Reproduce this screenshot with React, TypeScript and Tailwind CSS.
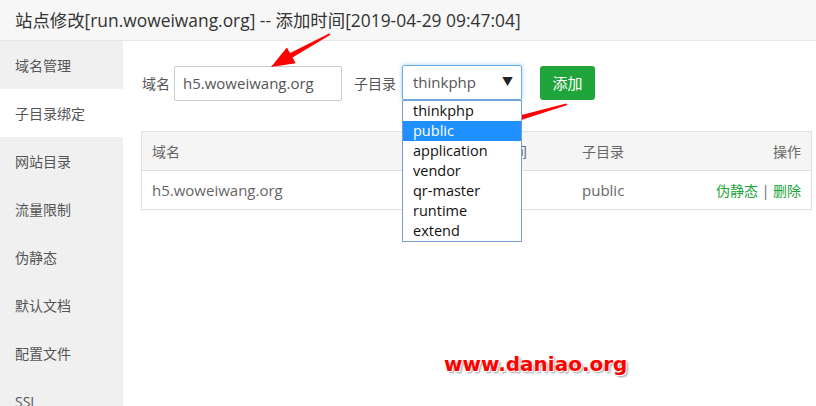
import React from "react";

const menu = ["域名管理", "子目录绑定", "网站目录", "流量限制", "伪静态", "默认文档", "配置文件", "SSL"];
const options = ["thinkphp", "public", "application", "vendor", "qr-master", "runtime", "extend"];

export default function App() {
  return (
    <div className="relative w-[816px] h-[406px] overflow-hidden bg-white font-['Open_Sans','Noto_Sans_CJK_SC',sans-serif]">
      <div className="h-[41px] bg-[#f7f7f7] border-b border-[#e6e6e6] flex items-center pl-[15px] text-[17.4px] text-[#333]">
        站点修改[run.woweiwang.org] -- 添加时间[2019-04-29 09:47:04]
      </div>
      <div className="flex h-[365px]">
        <div className="w-[123px] bg-[#f0f0f0] flex flex-col">
          {menu.map((m, i) => (
            <div
              key={m}
              className={`h-[48px] shrink-0 flex items-center pl-[15px] text-[14px] text-[#555] ${i === 1 ? "bg-white" : ""}`}
            >
              {m}
            </div>
          ))}
        </div>
        <div className="flex-1 pl-[18px] pr-[4px] pt-[24px]">
          <div className="flex items-center h-[36px] text-[14px] text-[#555]">
            <span className="ml-[1px] mr-[4px]">域名</span>
            <div className="w-[168px] h-[35px] border border-[#ccc] rounded-[2px] flex items-center pl-[8px] text-[15px] text-[#555]">
              h5.woweiwang.org
            </div>
            <span className="ml-[12px] mr-[6px]">子目录</span>
            <div className="relative mt-[-2px]">
              <div className="w-[120px] h-[35px] border border-[#66afe9] rounded-[2px] shadow-[0_0_4px_rgba(102,175,233,0.6)] flex items-center pl-[10px] pr-[8px] text-[15px] text-[#555]">
                <span className="flex-1">thinkphp</span>
                <span className="text-[11px] text-[#222]">▼</span>
              </div>
              <div className="absolute left-0 top-[35px] w-[120px] border border-[#7a9cd3] bg-white z-10">
                {options.map((o, i) => (
                  <div
                    key={o}
                    className={`h-[20px] leading-[19px] pl-[10px] text-[14.5px] ${i === 1 ? "bg-[#1e90ff] text-white" : "text-[#111]"}`}
                  >
                    {o}
                  </div>
                ))}
              </div>
            </div>
            <div className="ml-[18px] w-[55px] h-[34px] bg-[#20a53a] rounded-[3px] flex items-center justify-center text-white text-[15px]">
              添加
            </div>
          </div>
          <div className="mt-[30px] border border-[#e0e0e0] text-[14px] text-[#666]">
            <div className="h-[39px] bg-[#f5f5f5] border-b border-[#e0e0e0] flex items-center px-[10px]">
              <span className="w-[319px] shrink-0">域名</span>
              <span className="w-[111px] shrink-0">添加时间</span>
              <span>子目录</span>
              <span className="flex-1 text-right">操作</span>
            </div>
            <div className="h-[38px] flex items-center px-[10px] text-[15px]">
              <span className="w-[430px] shrink-0">h5.woweiwang.org</span>
              <span>public</span>
              <span className="flex-1 text-right text-[14px]">
                <span className="text-[#20a53a]">伪静态</span>
                <span className="text-[#666]"> | </span>
                <span className="text-[#20a53a]">删除</span>
              </span>
            </div>
          </div>
        </div>
      </div>
      <svg className="absolute left-0 top-0 pointer-events-none" width="816" height="406">
        <polygon
          fill="#f00"
          points="271,67 286.9,47.4 290.1,53.1 329.6,33.3 330.4,34.7 292.5,57.5 295.7,63.2"
        />
        <polygon
          fill="#f00"
          points="493.3,125.7 514.8,110.1 516.6,116.3 566.2,103.5 567.4,105.1 518,121.1 519.8,127.3"
        />
      </svg>
      <div className="absolute left-[444px] top-[349px] text-[20px] font-bold text-[#ff0000] font-['DejaVu_Sans',sans-serif] [text-shadow:1px_1px_0_#fff,2px_2px_2px_#999]">
        www.daniao.org
      </div>
    </div>
  );
}
